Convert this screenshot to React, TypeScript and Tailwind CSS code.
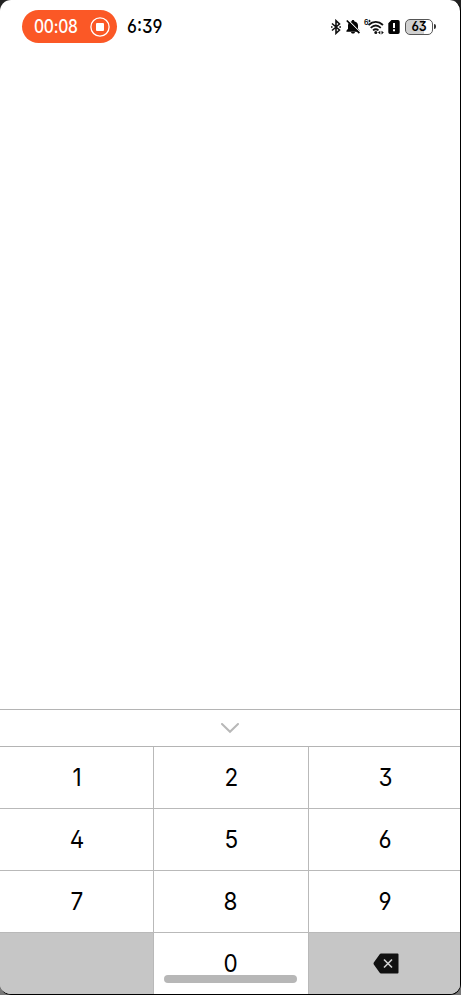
import React from 'react';

const KEY_ROWS = [
  ['1', '2', '3'],
  ['4', '5', '6'],
  ['7', '8', '9'],
];

const DigitKey = ({ label }: { label: string }) => (
  <button className="flex h-full w-full items-center justify-center bg-white text-[24.5px] leading-none text-black">
    <span className="scale-x-92 [font-feature-settings:'ss01']">{label}</span>
  </button>
);

const StatusBar = () => (
  <header className="flex h-[53px] shrink-0 items-center pl-[22px] pr-[24px]">
    {/* screen recording pill */}
    <div className="flex h-[33px] w-[95px] items-center justify-between rounded-full bg-[#fb5826] pl-3 pr-[7px] text-white">
      <span className="w-[44px] origin-left scale-x-87 whitespace-nowrap text-[18px] font-medium leading-none tracking-[-0.3px]">00:08</span>
      <svg className="h-5 w-5" viewBox="0 0 20 20" fill="none">
        <circle cx="10" cy="10" r="9.1" stroke="#fff" strokeWidth="1.3" />
        <rect x="6" y="6" width="8" height="8" rx="1" fill="#fff" />
      </svg>
    </div>
    <span className="ml-[10px] origin-left scale-x-88 text-[19px] font-medium leading-none text-black [font-feature-settings:'ss01']">6:39</span>

    <div className="ml-auto flex items-center">
      {/* bluetooth */}
      <svg className="h-4 w-[10px]" viewBox="0 0 10 16" fill="none" stroke="#111" strokeWidth="1.6">
        <path d="M1 4.5 8.5 11 5 14.3V1.7L8.5 5 1 11.5" />
        <path d="M0 8h1.5M8.3 8h1.7" />
      </svg>
      {/* muted bell */}
      <svg className="ml-[5px] h-4 w-[14px]" viewBox="0 0 14 16">
        <path d="M7 1c.8 0 1.3.5 1.3 1.2 2.4.6 3.7 2.2 3.7 4.2v3.4l1.6 2v.9H.4v-.9l1.6-2V6.4c0-2 1.300-3.600 3.700-4.200C5.700 1.500 6.200 1 7 1ZM5 13h4c-.2 1-.9 1.600-2 1.600S5.200 14 5 13Z" fill="#050505" />
        <path d="M2.200 1.200 14 13" stroke="#fff" strokeWidth="1.100" />
        <path d="M.8 1.500 13.400 14.200" stroke="#050505" strokeWidth="1.700" />
      </svg>
      {/* wifi 6+ */}
      <div className="relative ml-[4px] h-4 w-[20px]">
        <span className="absolute left-0 top-0 text-[7px] font-semibold leading-none text-black">6</span>
        <svg className="h-4 w-[20px]" viewBox="0 0 20 16" fill="none">
          <path d="M5.500 .8v2.400M4.300 2h2.400" stroke="#111" strokeWidth=".9" />
          <path d="M4.500 6C9 2 14.500 2 19 6M6.700 8.800c3.200-2.900 6.900-2.900 10.100 0M9 11.400c1.800-1.500 3.700-1.500 5.500 0" stroke="#111" strokeWidth="1.800" />
          <circle cx="11.800" cy="13.600" r="1.500" fill="#111" />
          <path d="m14 13.600 2.300-1.900v3.800zM19.800 13.600l-2.300-1.900v3.800z" fill="#111" />
        </svg>
      </div>
      {/* sim alert */}
      <svg className="ml-[4px] h-[14px] w-[12px]" viewBox="0 0 12 14">
        <path d="M3.500 0H10a1.700 1.700 0 0 1 1.700 1.700v10.600A1.700 1.700 0 0 1 10 14H2a1.700 1.700 0 0 1-1.700-1.700V3.200z" fill="#030303" />
        <path d="M6 3v5M6 9.200v2" stroke="#fff" strokeWidth="2" />
      </svg>
      {/* battery */}
      <div className="ml-[5px] flex h-[16px] w-[28px] items-center justify-center rounded-[5px] border border-[#555] bg-[linear-gradient(90deg,#d0d0d0_68%,#fff_68%)] text-[13px] font-semibold leading-none text-black">
        <span className="scale-x-95 [font-feature-settings:'ss01']">63</span>
      </div>
      <div className="ml-px h-[5px] w-[2px] rounded-r-full bg-[#333]" />
    </div>
  </header>
);

const App = () => {
  return (
    <div className="h-[995px] w-[461px] overflow-hidden bg-[linear-gradient(#222_50%,#777_50%)] font-['Inter','Noto_Sans',sans-serif]">
      <div className="relative flex h-full flex-col overflow-hidden rounded-[11px] border-b border-r border-black bg-white">
        <StatusBar />

        <main className="flex-1" />

        <section className="shrink-0">
          <button className="flex h-[37px] w-full items-center justify-center border-t border-[#b4b4b4]">
            <svg className="h-[11px] w-[18px]" viewBox="0 0 18 11" fill="none">
              <path d="m1 1 8 7.800L17 1" stroke="#b8b8b8" strokeWidth="2" strokeLinecap="round" />
            </svg>
          </button>

          <div className="grid grid-cols-[153px_154px_153px] grid-rows-[61px_61px_61px_61px] gap-px border-t border-[#b4b4b4] bg-[#b9b9b9]">
            {KEY_ROWS.flat().map((digit) => (
              <DigitKey key={digit} label={digit} />
            ))}
            <div className="bg-[#c6c6c6]" />
            <DigitKey label="0" />
            <button className="flex items-center justify-center bg-[#c6c6c6]">
              <svg className="h-[21px] w-[26px]" viewBox="0 0 26 21">
                <path d="M8 .5h16.500a1 1 0 0 1 1 1v18a1 1 0 0 1-1 1H8q-.8 0-1.300-.8L.8 11.500q-.6-1 0-2L6.700 1.300Q7.200.5 8 .5Z" fill="#111" />
                <path d="m11 6.500 8 8M19 6.500l-8 8" stroke="#d2d2d2" strokeWidth="1.600" />
              </svg>
            </button>
          </div>
        </section>

        {/* home indicator */}
        <div className="absolute bottom-[11px] left-[164px] h-[8px] w-[133px] rounded-full bg-[#b7b7b7]" />
      </div>
    </div>
  );
};

export default App;
